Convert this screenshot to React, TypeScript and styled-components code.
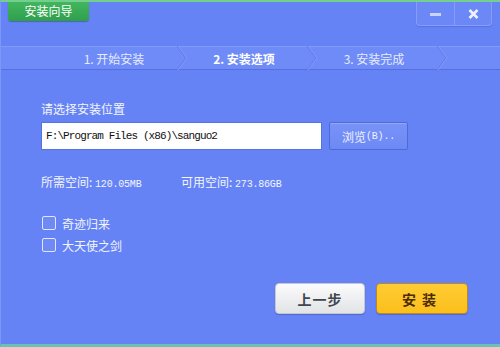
import React from "react";
import styled, { createGlobalStyle } from "styled-components";

const Global = createGlobalStyle`
  html, body { margin: 0; padding: 0; background: #6683f5; }
  * { box-sizing: border-box; }
`;

const CJK = `"Noto Sans CJK SC", "Liberation Sans", sans-serif`;
const MONO = `"Liberation Mono", "Noto Sans CJK SC", monospace`;

const Window = styled.div`
  width: 500px;
  height: 347px;
  background: #6683f5;
  border-top: 2px solid #73cf8e;
  border-left: 1px solid #7d97f7;
  border-bottom: 3px solid #67c3b2;
  font-family: ${CJK};
  color: #fff;
  display: flex;
  flex-direction: column;
  overflow: hidden;
`;

const Header = styled.div`
  height: 44px;
  display: flex;
  justify-content: space-between;
  align-items: flex-start;
  padding: 0 7px 0 7px;
`;

const TitleTab = styled.div`
  width: 81px;
  height: 19px;
  background: linear-gradient(#42b65e, #2f9f4c);
  border-radius: 0 0 3px 3px;
  box-shadow: 0 1px 1px rgba(0, 0, 0, 0.25);
  font-size: 12px;
  line-height: 18px;
  text-align: center;
  color: #fff;
`;

const WinButtons = styled.div`
  display: flex;
  height: 24px;
  border: 1px solid rgba(140, 160, 250, 0.9);
  border-top: none;
  border-radius: 0 0 4px 4px;
  background: #6c88f6;
  box-shadow: 0 1px 1px rgba(60, 80, 190, 0.35);
  margin-right: 1px;
`;

const WinButton = styled.div<{ $divider?: boolean }>`
  width: 37px;
  display: flex;
  align-items: center;
  justify-content: center;
  border-left: ${(p) => (p.$divider ? "1px solid rgba(140,160,250,0.9)" : "none")};
`;

const StepBar = styled.div`
  height: 24px;
  background: #6f8bf7;
  border-top: 1px solid #8199f8;
  border-bottom: 1px solid #5770e0;
  display: grid;
  grid-template-columns: 130px 130px 130px;
  padding-left: 53px;
`;

const Step = styled.div<{ $active?: boolean }>`
  position: relative;
  display: flex;
  align-items: center;
  justify-content: center;
  padding-right: 10px;
  font-size: 12px;
  font-weight: ${(p) => (p.$active ? 700 : 400)};
  color: ${(p) => (p.$active ? "#ffffff" : "#e6ebff")};
`;

const Chevron = styled.svg`
  position: absolute;
  right: -4px;
  top: -1px;
`;

const Content = styled.div`
  padding: 31px 40px 0 40px;
  display: flex;
  flex-direction: column;
`;

const Label = styled.div`
  font-size: 12px;
  line-height: 16px;
  color: #f4f6ff;
`;

const PathRow = styled.div`
  margin-top: 5px;
  display: flex;
  gap: 7px;
`;

const PathInput = styled.div`
  width: 281px;
  height: 28px;
  background: #fff;
  border: 1px solid #5a72dc;
  font-family: ${MONO};
  font-size: 11px;
  letter-spacing: -0.9px;
  color: #111;
  display: flex;
  align-items: center;
  padding-left: 4px;
`;

const BrowseButton = styled.div`
  width: 79px;
  height: 28px;
  background: linear-gradient(#7893f7, #6d89f5);
  border: 1px solid #5169d6;
  border-radius: 2px;
  box-shadow: inset 0 1px 0 rgba(255, 255, 255, 0.2);
  display: flex;
  align-items: center;
  justify-content: center;
  font-size: 12px;
  color: #eef1ff;
`;

const Mono = styled.span`
  font-family: ${MONO};
  font-size: 10px;
  letter-spacing: -0.2px;
`;

const InfoRow = styled.div`
  margin-top: 24px;
  display: flex;
  font-size: 12px;
  line-height: 16px;
  color: #f2f5ff;
`;

const InfoItem = styled.div<{ $width?: number }>`
  width: ${(p) => (p.$width ? `${p.$width}px` : "auto")};
`;

const CheckList = styled.div`
  margin-top: 22px;
  display: flex;
  flex-direction: column;
  gap: 6px;
`;

const CheckRow = styled.label`
  display: flex;
  align-items: center;
  gap: 6px;
  height: 16px;
  font-size: 12px;
  color: #f2f5ff;
`;

const Box = styled.span`
  width: 14px;
  height: 14px;
  border: 1px solid #dfe6ff;
  border-radius: 2px;
  background: rgba(255, 255, 255, 0.06);
  margin-left: 1px;
`;

const Footer = styled.div`
  margin-top: 30px;
  display: flex;
  justify-content: flex-end;
  gap: 11px;
  padding-right: 32px;
`;

const ActionButton = styled.div<{ $primary?: boolean }>`
  width: ${(p) => (p.$primary ? "92px" : "90px")};
  height: 31px;
  border-radius: 4px;
  display: flex;
  align-items: center;
  justify-content: center;
  font-size: 14px;
  font-weight: 700;
  letter-spacing: ${(p) => (p.$primary ? "6px" : "1px")};
  color: ${(p) => (p.$primary ? "#4a2c06" : "#3f4650")};
  background: ${(p) =>
    p.$primary
      ? "linear-gradient(#ffcc33, #fbbf1c)"
      : "linear-gradient(#fbfbfb, #e2e3e6)"};
  border: 1px solid ${(p) => (p.$primary ? "#b8892a" : "#c6c8ce")};
  box-shadow: 0 1px 1px rgba(40, 50, 120, 0.35);
`;

const ChevronIcon = () => (
  <Chevron width="12" height="24" viewBox="0 0 12 24">
    <polyline points="1,0 10,12 1,24" fill="none" stroke="#6078e6" strokeWidth="1" />
    <polyline points="2,0 11,12 2,24" fill="none" stroke="#8499f8" strokeWidth="1" />
  </Chevron>
);

export default function App() {
  const steps = [
    { label: "1. 开始安装", active: false },
    { label: "2. 安装选项", active: true },
    { label: "3. 安装完成", active: false },
  ];
  return (
    <>
      <Global />
      <Window>
        <Header>
          <TitleTab>安装向导</TitleTab>
          <WinButtons>
            <WinButton>
              <svg width="11" height="4" viewBox="0 0 11 4">
                <rect x="0" y="1" width="11" height="3" fill="#c9d3fb" />
              </svg>
            </WinButton>
            <WinButton $divider>
              <svg width="11" height="10" viewBox="0 0 11 10">
                <path d="M1.5 1 L9.5 9 M9.5 1 L1.5 9" stroke="#eef2ff" strokeWidth="2.6" />
              </svg>
            </WinButton>
          </WinButtons>
        </Header>
        <StepBar>
          {steps.map((s) => (
            <Step key={s.label} $active={s.active}>
              {s.label}
              <ChevronIcon />
            </Step>
          ))}
        </StepBar>
        <Content>
          <Label>请选择安装位置</Label>
          <PathRow>
            <PathInput>F:\Program Files (x86)\sanguo2</PathInput>
            <BrowseButton>
              浏览<Mono>(B)..</Mono>
            </BrowseButton>
          </PathRow>
          <InfoRow>
            <InfoItem $width={140}>
              所需空间: <Mono>120.05MB</Mono>
            </InfoItem>
            <InfoItem>
              可用空间: <Mono>273.86GB</Mono>
            </InfoItem>
          </InfoRow>
          <CheckList>
            <CheckRow>
              <Box />
              奇迹归来
            </CheckRow>
            <CheckRow>
              <Box />
              大天使之剑
            </CheckRow>
          </CheckList>
        </Content>
        <Footer>
          <ActionButton>上一步</ActionButton>
          <ActionButton $primary>安装</ActionButton>
        </Footer>
      </Window>
    </>
  );
}
